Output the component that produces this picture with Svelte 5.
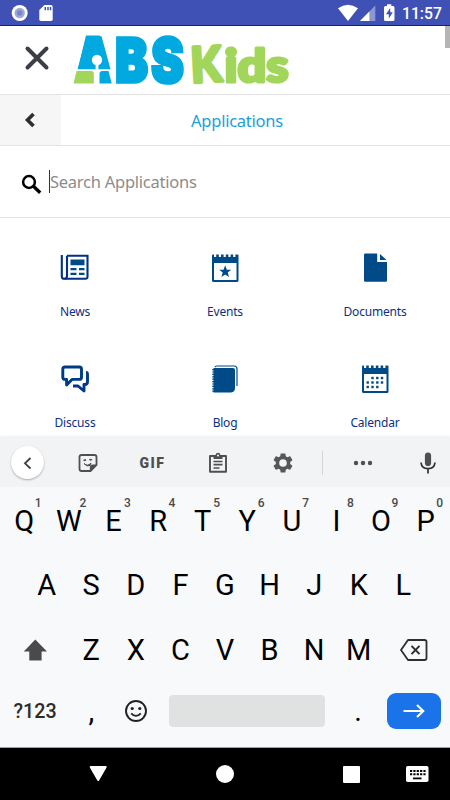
<script lang="ts">
    type App = { name: string; icon: string };

    const apps: App[] = [
        { name: 'News', icon: 'news' },
        { name: 'Events', icon: 'events' },
        { name: 'Documents', icon: 'documents' },
        { name: 'Discuss', icon: 'discuss' },
        { name: 'Blog', icon: 'blog' },
        { name: 'Calendar', icon: 'calendar' }
    ];

    const topRow = 'QWERTYUIOP'.split('');
    const middleRow = 'ASDFGHJKL'.split('');
    const bottomRow = 'ZXCVBNM'.split('');

    // spiral binding positions, shared by the calendar-like icons
    const teeth = [4, 8.8, 13.6, 18.4, 23.2];

    // day dots of the calendar icon: [x, y]
    const days = [
        [12.5, 15], [17.3, 15], [22, 15],
        [7.7, 19.5], [12.5, 19.5], [17.3, 19.5], [22, 19.5],
        [7.7, 24], [12.5, 24], [17.3, 24]
    ];

    let query = $state('');
</script>

<div class="screen">
    <div class="status-bar">
        <svg class="status-left" width="60" height="25" viewBox="0 0 60 25">
            <circle cx="19.7" cy="13" r="8" fill="#fff" />
            <circle cx="19.7" cy="13" r="5.2" fill="#9fa8da" />
            <circle cx="19.7" cy="13" r="2.8" fill="#7985cb" />
            <path d="M44.5 5H51q1.7 0 1.7 1.7V19.3q0 1.7-1.7 1.7H41q-1.7 0-1.7-1.7V10z" fill="#fff" />
            <path d="M45.3 7v3.2M48 7v3.2M50.5 7v3.2" stroke="#3f51b5" stroke-width="1.5" />
        </svg>
        <div class="status-right">
            <svg width="60" height="25" viewBox="0 0 60 25">
                <path d="M0 8.2Q10 1.2 20 8.2L10 21z" fill="#fff" />
                <path d="M37.3 5.5V21H22z" fill="#8c97d3" />
                <path d="M31.4 11.5V21H22z" fill="#fff" />
                <path d="M49 4.3h4.3V6H55q1.5 0 1.5 1.5v12Q56.5 21 55 21h-7.5q-1.5 0-1.5-1.5v-12Q46 6 47.5 6H49z" fill="#fff" />
                <path d="M52.2 8l-4.2 6.3h2.8V18.5l4-6.3h-2.6z" fill="#3f51b5" />
            </svg>
            <span class="clock">11:57</span>
        </div>
    </div>

    <header class="brand">
        <svg class="close" width="26" height="26" viewBox="0 0 26 26">
            <path d="M3.5 3.5l19 19M22.5 3.5l-19 19" stroke="#3c3d46" stroke-width="4" stroke-linecap="round" />
        </svg>
        <svg class="logo" width="220" height="66" viewBox="72 27 220 66">
            <text class="abs" x="1 51.500 96.500" y="0" transform="translate(74 81.600) scale(0.8 1)" fill="#00a9e0" stroke="#00a9e0" stroke-width="3.600">ABS</text>
            <!-- solid body and coloured feet of the A -->
            <path d="M86 35.500h13.500l8.200 33.500H78z" fill="#00a9e0" />
            <path d="M72 69.200h42.300V86H72z" fill="#fff" />
            <path d="M76.500 71H91q2.800 0 2.800 2.800V83.500H73.500z" fill="#a2d65b" />
            <path d="M102.500 71h6l3.200 12.500H99.500V74q0-3 3-3z" fill="#00a9e0" />
            <circle cx="97" cy="60" r="5.200" fill="#fff" />
            <path d="M95.600 64h2.800v6h-2.800z" fill="#fff" />
            <g class="kids" fill="#a2d65b" stroke="#a2d65b" stroke-linejoin="round">
                <text x="190.500" y="82" font-size="49" stroke-width="3.400" textLength="31" lengthAdjust="spacingAndGlyphs" transform="rotate(-3 206 64)">K</text>
                <text x="224.500" y="81.800" font-size="46" stroke-width="3.200" textLength="64" lengthAdjust="spacingAndGlyphs">ids</text>
            </g>
        </svg>
        <span class="scrollbar"></span>
    </header>

    <nav class="title-bar">
        <div class="back">
            <svg width="14" height="18" viewBox="0 0 14 18">
                <path d="M10.500 3L4.500 9l6 6" fill="none" stroke="#2e2e2e" stroke-width="3.600" />
            </svg>
        </div>
        <h1>Applications</h1>
    </nav>

    <div class="search">
        <svg width="22" height="22" viewBox="0 0 22 22">
            <circle cx="8" cy="8" r="5.900" fill="none" stroke="#000" stroke-width="2.500" />
            <path d="M12.200 12l7 6.800" stroke="#000" stroke-width="3.300" />
        </svg>
        <span class="caret"></span>
        <input type="text" placeholder="Search Applications" bind:value={query} />
    </div>

    <main class="grid">
        {#each apps as app}
            <div class="app">
                <svg width="30" height="30" viewBox="0 0 30 30" fill="#004b87">
                    {#if app.icon === 'news'}
                        <g fill="none" stroke="#003087" stroke-width="2.100">
                            <path d="M7 3.700h20.500v21q0 2-2 2H4q-2.200 0-2.200-2.200V3" />
                            <path d="M7 3.700v20q0 3-2.500 3" />
                        </g>
                        <path d="M10.500 7.500h14v5.700h-14zM10.500 16h6v2.300h-6zM19 16h5.500v2.300H19zM10.500 20.700h6V23h-6zM19 20.700h5.500V23H19z" />
                    {:else if app.icon === 'events' || app.icon === 'calendar'}
                        <path d="M2 3.500q0-1 1-1h24.500q1 0 1 1v25q0 1.500-1.500 1.500h-23.500Q2 30 2 28.500zM4 11v17h22.500V11z" fill-rule="evenodd" />
                        {#each teeth as x}
                            <path d="M{x} 2h2.200v3h-2.200z" fill="#fff" />
                        {/each}
                        {#if app.icon === 'events'}
                            <path d="M15.200 13.300l1.600 4.400h4.400l-3.500 2.800 1.300 4.500-3.800-2.600-3.800 2.600 1.300-4.500-3.500-2.800h4.400z" />
                        {:else}
                            {#each days as [x, y]}
                                <rect x={x - 1.2} y={y - 1.2} width="2.400" height="2.400" />
                            {/each}
                        {/if}
                    {:else if app.icon === 'documents'}
                        <path d="M5.200 1.500h12v8.500H27V28.500q0 1.200-1.200 1.200H5.200q-1.200 0-1.200-1.200V2.700q0-1.200 1.200-1.200z" />
                        <path d="M20 2L26.500 8H20z" />
                    {:else if app.icon === 'discuss'}
                        <g fill="none" stroke="#003a87" stroke-width="2.900" stroke-linejoin="round">
                            <path d="M5 4h14.300q2.200 0 2.200 2.200v8q0 2.200-2.200 2.200H12L6.600 22v-5.600H5q-2.200 0-2.200-2.200V6.200Q2.800 4 5 4z" />
                            <path d="M26 9.500q1.500 0 1.500 2v7q0 3-2.500 3h-1v6.500L18 23h-5" />
                        </g>
                    {:else}
                        <path d="M3.500 5H23q2 0 2 2v18q0 4-4 4.500H3.500z" />
                        <path d="M5 4.300Q5 3 7 3h17q3 0 3 3v17" fill="none" stroke="#004b87" stroke-width="1.200" />
                        <path d="M3.200 6v23" stroke="#004b87" stroke-width="2" stroke-dasharray="1.200 1.200" />
                    {/if}
                </svg>
                <span>{app.name}</span>
            </div>
        {/each}
    </main>

    <section class="keyboard">
        <div class="toolbar">
            <div class="collapse">
                <svg width="14" height="14" viewBox="0 0 14 14">
                    <path d="M9.500 2L4 7.300l5.500 5.200" fill="none" stroke="#3c4043" stroke-width="1.800" />
                </svg>
            </div>
            <div class="tool">
                <svg width="20" height="20" viewBox="0 0 20 20" fill="none" stroke="#4d4f52" stroke-width="1.800">
                    <path d="M12.500 18H3.500Q1.500 18 1.500 16V4q0-2 2-2h13q2 0 2 2v8z" />
                    <path d="M12.300 18v-4q0-2 2-2h4.200z" fill="#4d4f52" stroke-width="1" />
                    <path d="M5.500 7.500l2.500-.7M11.500 7q1.300-.9 2.300.2" />
                    <path d="M6 10.500q3.500 3.500 7-.5l-1 2.500q-2.700 1.700-6-2z" fill="#4d4f52" stroke-width="1" />
                </svg>
            </div>
            <div class="tool gif">GIF</div>
            <div class="tool">
                <svg width="20" height="22" viewBox="0 0 20 22">
                    <path d="M2 4h16v15.800H2z" fill="none" stroke="#4d4f52" stroke-width="1.900" stroke-linejoin="round" />
                    <path d="M5.500 3h2Q8 .7 10 .7T12.500 3h2v4h-9z" fill="#4d4f52" />
                    <circle cx="10" cy="3.500" r="1" fill="#fff" />
                    <path d="M5.500 9.500h9M5.500 12.700h9M5.500 16h6" stroke="#4d4f52" stroke-width="1.700" />
                </svg>
            </div>
            <div class="tool">
                <svg width="22" height="22" viewBox="1 1 22 22" fill="#55575a">
                    <path d="M19.140 12.940c.04-.3.06-.61.06-.94s-.02-.64-.07-.94l2.030-1.580c.18-.14.23-.41.12-.61l-1.920-3.320c-.12-.22-.37-.29-.59-.22l-2.390.96c-.5-.38-1.030-.7-1.620-.94l-.36-2.540c-.04-.24-.24-.41-.48-.41h-3.840c-.24 0-.43.17-.47.41l-.36 2.540c-.59.24-1.130.57-1.620.94l-2.390-.96c-.22-.08-.47 0-.59.22L2.740 8.870c-.12.21-.08.47.12.61l2.030 1.580c-.05.3-.09.63-.09.94s.02.64.07.94l-2.030 1.580c-.18.14-.23.41-.12.61l1.920 3.320c.12.22.37.29.59.22l2.390-.96c.5.38 1.030.7 1.620.94l.36 2.540c.05.24.24.41.48.41h3.840c.24 0 .44-.17.47-.41l.36-2.540c.59-.24 1.130-.56 1.620-.94l2.390.96c.22.08.47 0 .59-.22l1.920-3.320c.12-.22.07-.47-.12-.61zM12 15.800A3.800 3.800 0 1 1 12 8.200a3.800 3.800 0 0 1 0 7.600z" />
                </svg>
            </div>
            <span class="divider"></span>
            <div class="tool more">
                <svg width="20" height="6" viewBox="0 0 20 6" fill="#4d4f52">
                    <circle cx="3" cy="3" r="2.200" />
                    <circle cx="10" cy="3" r="2.200" />
                    <circle cx="17" cy="3" r="2.200" />
                </svg>
            </div>
            <div class="mic">
                <svg width="18" height="22" viewBox="0 0 18 22">
                    <rect x="5.900" y=".5" width="6.200" height="13.500" rx="3.100" fill="#4d4f52" />
                    <path d="M2 10.500q.6 6.200 7 6.200t7-6.200M9 16.700V21.500" fill="none" stroke="#2c2e30" stroke-width="1.700" />
                </svg>
            </div>
        </div>

        <div class="row top">
            {#each topRow as key, i}
                <div class="key">{key}<sup>{(i + 1) % 10}</sup></div>
            {/each}
        </div>
        <div class="row middle">
            {#each middleRow as key}
                <div class="key">{key}</div>
            {/each}
        </div>
        <div class="row bottom">
            <div class="key wide">
                <svg width="24" height="22" viewBox="0 0 24 22">
                    <path d="M12.300 .5L24 12.500H18.600V21.500H6.300V12.500H.8z" fill="#4a4a4a" />
                </svg>
            </div>
            {#each bottomRow as key}
                <div class="key">{key}</div>
            {/each}
            <div class="key wide erase">
                <svg width="28" height="22" viewBox="0 0 28 22" fill="none" stroke="#2c2e31" stroke-width="1.800">
                    <path d="M8 1H24.500q2 0 2 2V19q0 2-2 2H8L1 11z" stroke-linejoin="round" />
                    <path d="M11.500 6.900l8 8.200M19.500 6.900l-8 8.200" stroke-width="2" />
                </svg>
            </div>
        </div>
        <div class="row controls">
            <div class="key symbols">?123</div>
            <div class="key">,</div>
            <div class="key">
                <svg width="24" height="24" viewBox="0 0 24 24">
                    <circle cx="12" cy="12" r="10" fill="none" stroke="#222" stroke-width="1.900" />
                    <circle cx="8.200" cy="9.500" r="1.600" fill="#222" />
                    <circle cx="15.800" cy="9.500" r="1.600" fill="#222" />
                    <path d="M7.200 14.300q4.800 5.200 9.600 0" fill="none" stroke="#222" stroke-width="1.800" />
                </svg>
            </div>
            <div class="space"></div>
            <div class="key period">.</div>
            <div class="enter">
                <svg width="24" height="16" viewBox="0 0 24 16">
                    <path d="M1.500 8h20M15 2l6.300 6L15 14" fill="none" stroke="#fff" stroke-width="2.100" />
                </svg>
            </div>
        </div>
    </section>

    <footer class="system-nav">
        <div class="slot">
            <svg width="20" height="18" viewBox="0 0 20 18">
                <path d="M2.700 2h15L10.200 15z" fill="#fff" stroke="#fff" stroke-width="2" stroke-linejoin="round" />
            </svg>
        </div>
        <div class="slot"><span class="home"></span></div>
        <div class="slot"><span class="recent"></span></div>
        <div class="slot last">
            <svg width="24" height="18" viewBox="0 0 24 18">
                <rect x="1" y="1" width="22.500" height="16" rx="1.800" fill="#fff" />
                <path d="M5 6h16M5 9.300h16" stroke="#000" stroke-width="2" stroke-dasharray="2.200 1.150" />
                <path d="M8 13.400h8.500" stroke="#000" stroke-width="1.800" />
            </svg>
        </div>
    </footer>
</div>

<style>
    :global(body)
    {
        margin: 0;
        background: #fff;
    }

    .screen
    {
        width: 450px;
        height: 800px;
        overflow: hidden;
        display: flex;
        flex-direction: column;
        font-family: "Noto Sans", "Open Sans", sans-serif;
        background: #fff;
    }

    svg
    {
        display: block;
        flex: none;
    }

    .status-bar
    {
        box-sizing: border-box;
        height: 26px;
        flex: none;
        display: flex;
        justify-content: space-between;
        background: #3f51b5;
        border-bottom: 1px solid #0a1fa0;
    }

    .status-right
    {
        display: flex;
        width: 112px;
    }

    .clock
    {
        margin-left: 4px;
        color: #fff;
        font: 500 15.7px/27px Roboto, sans-serif;
    }

    .brand
    {
        box-sizing: border-box;
        height: 69px;
        flex: none;
        display: flex;
        align-items: flex-start;
        border-bottom: 1px solid #e4e4e4;
    }

    .close
    {
        margin: 19px 0 0 24px;
    }

    .logo
    {
        margin: 1px 0 0 22px;
        overflow: visible;
    }

    .abs
    {
        font: 900 61px Inter, sans-serif;
    }

    .kids
    {
        font-family: Lato, sans-serif;
        font-weight: 900;
    }

    .scrollbar
    {
        width: 5px;
        height: 22px;
        margin-left: auto;
        background: #b5b5b5;
    }

    .title-bar
    {
        box-sizing: border-box;
        height: 51px;
        flex: none;
        display: flex;
        border-bottom: 1px solid #e4e4e4;
    }

    .back
    {
        width: 61px;
        display: flex;
        align-items: center;
        justify-content: center;
        background: #f6f6f6;
    }

    .back svg
    {
        margin-right: 2px;
    }

    h1
    {
        flex: 1;
        margin: 0;
        padding-right: 37px;
        color: #1a9fd9;
        font-size: 16.5px;
        font-weight: 400;
        line-height: 51px;
        letter-spacing: -0.25px;
        text-align: center;
    }

    .search
    {
        box-sizing: border-box;
        height: 72px;
        flex: none;
        display: flex;
        align-items: center;
        padding-left: 21px;
        border-bottom: 1px solid #e4e4e4;
    }

    .search svg
    {
        margin-top: 6px;
    }

    .caret
    {
        width: 1px;
        height: 23px;
        margin-left: 6px;
        background: #333;
    }

    input
    {
        flex: 1;
        min-width: 0;
        padding: 0;
        border: 0;
        outline: 0;
        background: none;
        color: #333;
        font: 16.5px "Noto Sans", sans-serif;
        letter-spacing: -0.25px;
    }

    input::placeholder
    {
        color: #8c8c8c;
        opacity: 1;
    }

    .grid
    {
        height: 219px;
        flex: none;
        overflow: hidden;
        display: grid;
        grid-template-columns: repeat(3, 150px);
        grid-auto-rows: 111px;
        padding-top: 34px;
        box-sizing: border-box;
    }

    .app
    {
        display: flex;
        flex-direction: column;
        align-items: center;
        gap: 20px;
        color: #0c2f83;
        font-size: 12px;
        line-height: 20px;
        letter-spacing: -0.2px;
    }

    .keyboard
    {
        position: relative;
        box-sizing: border-box;
        height: 311px;
        flex: none;
        background: #f8f9fb;
        border-bottom: 1px solid #9aa3a8;
        box-shadow: 0 -1px 2px rgba(0, 0, 0, 0.06);
        font-family: Roboto, sans-serif;
    }

    .toolbar
    {
        height: 50px;
        display: flex;
        align-items: center;
        padding-top: 1px;
        box-sizing: border-box;
        background: #f1f3f4;
    }

    .collapse
    {
        width: 33px;
        height: 33px;
        margin: 0 11px;
        display: flex;
        align-items: center;
        justify-content: center;
        border-radius: 50%;
        background: #fff;
        box-shadow: 0 1px 2px rgba(0, 0, 0, 0.3);
    }

    .tool
    {
        width: 65px;
        display: flex;
        justify-content: center;
    }

    .gif
    {
        color: #4d4f52;
        font: 900 14px/20px Roboto, sans-serif;
        letter-spacing: 1.5px;
    }

    .divider
    {
        width: 1px;
        height: 24px;
        margin-left: 7px;
        background: #d2d4d6;
    }

    .more
    {
        width: 79px;
    }

    .mic
    {
        margin-left: 17px;
    }

    .row
    {
        height: 64.5px;
        display: flex;
        justify-content: center;
    }

    .key
    {
        position: relative;
        width: 44.6px;
        display: flex;
        align-items: center;
        justify-content: center;
        color: #000;
        font-size: 29px;
    }

    .top
    {
        height: 64px;
        padding-top: 2px;
    }

    /* secondary symbol in the corner of a key */
    .key sup
    {
        position: absolute;
        top: 7px;
        right: 5px;
        color: #4a4a4a;
        font-size: 12px;
        font-weight: 500;
        line-height: 14px;
    }

    .wide
    {
        width: 67px;
    }

    .erase svg
    {
        margin-right: 2px;
    }

    .controls
    {
        height: 57px;
        justify-content: flex-start;
        align-items: center;
    }

    .symbols
    {
        box-sizing: border-box;
        width: 69px;
        padding: 2px 0 0 1px;
        font-size: 19.7px;
        font-weight: 500;
        color: #2c2c2c;
    }

    .space
    {
        width: 156px;
        height: 32px;
        margin-left: 11px;
        border-radius: 4px;
        background: #e0e2e1;
    }

    .period
    {
        box-sizing: border-box;
        width: 62px;
        padding-left: 4px;
    }

    .enter
    {
        width: 54px;
        height: 36px;
        display: flex;
        align-items: center;
        justify-content: center;
        border-radius: 9px;
        background: #1a73e8;
    }

    .system-nav
    {
        height: 52px;
        flex: none;
        display: flex;
        padding-left: 35px;
        background: #000;
    }

    .slot
    {
        width: 126.5px;
        display: flex;
        align-items: center;
        justify-content: center;
    }

    .last
    {
        width: 24px;
        margin-left: -10px;
    }

    .home
    {
        width: 18px;
        height: 18px;
        border-radius: 50%;
        background: #fff;
    }

    .recent
    {
        width: 17px;
        height: 17px;
        border-radius: 1px;
        background: #fff;
    }
</style>
